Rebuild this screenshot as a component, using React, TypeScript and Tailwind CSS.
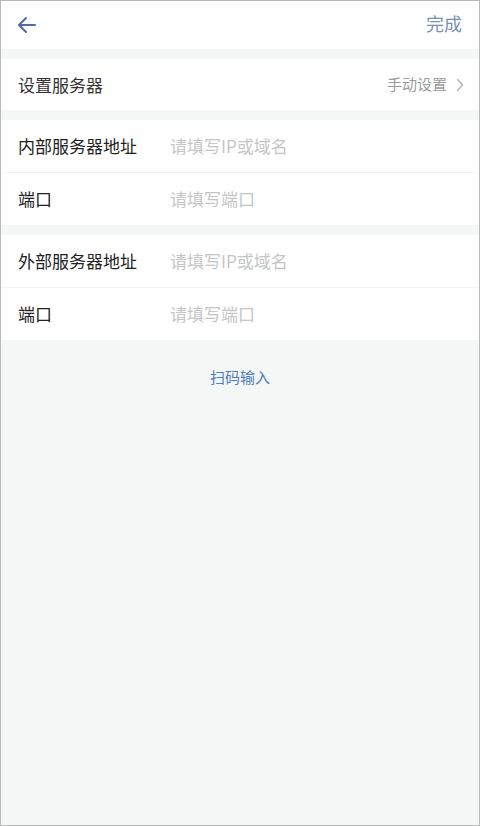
const font = { fontFamily: '"Noto Sans CJK SC", "Noto Sans", sans-serif' }

function FieldRow({ label, placeholder, divider }: { label: string; placeholder: string; divider?: boolean }) {
  return (
    <div className={`flex items-center pl-[17px] pr-4 ${divider ? 'h-[53px] border-b border-[#f1f3f3]' : 'h-[52px]'}`}>
      <span className="w-[152px] text-[17px] text-[#222]">{label}</span>
      <span className="text-[17px] text-[#c4c6c6]">{placeholder}</span>
    </div>
  )
}

export default function App() {
  return (
    <div style={font} className="w-[480px] h-[826px] flex flex-col bg-[#f5f7f7] border border-[#b7bab8] overflow-hidden">
      <header className="h-[48px] bg-white flex items-center justify-between pl-4 pr-[17px] shrink-0">
        <svg width="20" height="18" viewBox="0 0 20 18" fill="none" stroke="#4d6ea3" strokeWidth="2" strokeLinecap="round" strokeLinejoin="round">
          <path d="M18 9H2M9 2L2 9l7 7" />
        </svg>
        <span className="text-[18px] text-[#7990b6] mb-[3px]">完成</span>
      </header>

      <div className="mt-[10px] h-[51px] bg-white flex items-center justify-between pl-[17px] pr-[15px]">
        <span className="text-[17px] text-[#333]">设置服务器</span>
        <div className="flex items-center gap-[9px]">
          <span className="text-[15px] text-[#9a9c9c]">手动设置</span>
          <svg width="8" height="14" viewBox="0 0 8 14" fill="none" stroke="#b3b5b5" strokeWidth="1.4" strokeLinecap="round" strokeLinejoin="round">
            <path d="M1.5 1.5L6.5 7l-5 5.5" />
          </svg>
        </div>
      </div>

      <div className="mt-[10px] bg-white">
        <FieldRow label="内部服务器地址" placeholder="请填写IP或域名" divider />
        <FieldRow label="端口" placeholder="请填写端口" />
      </div>

      <div className="mt-[10px] bg-white">
        <FieldRow label="外部服务器地址" placeholder="请填写IP或域名" divider />
        <FieldRow label="端口" placeholder="请填写端口" />
      </div>

      <div className="mt-[26px] text-center text-[15px] text-[#4a7cc0]">扫码输入</div>
    </div>
  )
}
